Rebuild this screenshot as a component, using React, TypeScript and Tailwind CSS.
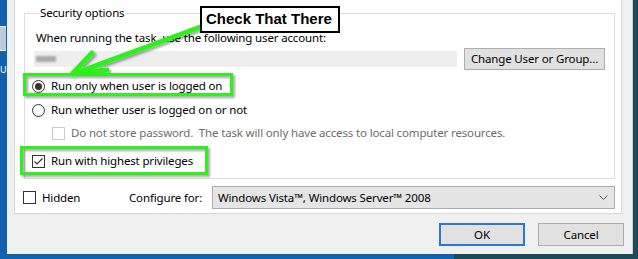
import React from "react";

const ui = { fontFamily: '"Noto Sans", "Open Sans", sans-serif' };

function Radio({ checked }: { checked?: boolean }) {
  return (
    <span className="w-[13px] h-[13px] rounded-full border border-[#333333] bg-white flex items-center justify-center shrink-0">
      {checked && <span className="w-[7px] h-[7px] rounded-full bg-[#333333]" />}
    </span>
  );
}

function Check({ checked, disabled }: { checked?: boolean; disabled?: boolean }) {
  return (
    <span
      className={
        disabled
          ? "w-[13px] h-[13px] border border-[#cccccc] bg-white shrink-0"
          : "w-[13px] h-[13px] border border-[#333333] bg-white shrink-0 flex items-center justify-center"
      }
    >
      {checked && (
        <svg width="11" height="11" viewBox="0 0 11 11">
          <path d="M1.5 5.5 L4 8 L9.5 2.5" fill="none" stroke="#333" strokeWidth="1.2" />
        </svg>
      )}
    </span>
  );
}

export default function App() {
  return (
    <div className="relative w-[638px] h-[259px] overflow-hidden flex flex-col text-[11.5px] tracking-[-0.15px] text-black" style={ui}>
      <div className="flex h-[254px]">
        <div className="w-[7px] bg-[#1162ae] flex flex-col">
          <div className="mt-[26px] h-[25px] w-[6px] bg-[#b9cbdc] border-y border-[#e8eef4]" />
          <div className="mt-[14px] text-[9px] leading-[10px] text-white">U</div>
        </div>
        <div className="flex-1 bg-[#f0f0f0] flex flex-col border-r border-[#cfcfcf]">
          <div className="ml-[7px] w-[608px] h-[214px] bg-white border-x border-b border-[#d9d9d9] flex flex-col">
            <fieldset className="mt-[5px] ml-[9px] w-[591px] h-[174px] border border-[#dcdcdc] pl-[7px]">
              <legend className="ml-[7px] px-[1px] leading-[16px]">Security options</legend>
              <div className="mt-[9px] ml-[4px] leading-[16px]">When running the task, use the following user account:</div>
              <div className="mt-[2px] flex items-center h-[22px]">
                <div className="ml-[2px] w-[423px] h-[16px] bg-[#eeeeee] flex items-center">
                  <div className="ml-[2px] w-[20px] h-[6px] bg-[#a9a9a9] blur-[1px]" />
                </div>
                <button className="ml-[7px] w-[141px] h-[22px] bg-[#e1e1e1] border border-[#adadad] leading-[16px]">
                  Change User or Group...
                </button>
              </div>
              <div className="mt-[8px] flex items-center h-[16px] gap-[6px]">
                <Radio checked />
                <span className="leading-[16px]">Run only when user is logged on</span>
              </div>
              <div className="mt-[8px] flex items-center h-[16px] gap-[6px]">
                <Radio />
                <span className="leading-[16px]">Run whether user is logged on or not</span>
              </div>
              <div className="mt-[7px] ml-[20px] flex items-center h-[16px] gap-[6px]">
                <Check disabled />
                <span className="leading-[16px] text-[#6d6d6d]">
                  Do not store password.&nbsp; The task will only have access to local computer resources.
                </span>
              </div>
              <div className="mt-[12px] flex items-center h-[16px] gap-[6px]">
                <Check checked />
                <span className="leading-[16px]">Run with highest privileges</span>
              </div>
            </fieldset>
            <div className="mt-[7px] ml-[8px] flex items-center h-[23px]">
              <div className="w-[106px] flex items-center gap-[6px]">
                <Check />
                <span>Hidden</span>
              </div>
              <span className="w-[83px]">Configure for:</span>
              <div className="w-[403px] h-[23px] bg-[#e5e5e5] border border-[#acacac] flex items-center pl-[5px] pr-[6px]">
                <span className="flex-1">Windows Vista™, Windows Server™ 2008</span>
                <svg width="9" height="6" viewBox="0 0 9 6">
                  <path d="M0.5 0.5 L4.5 4.5 L8.5 0.5" fill="none" stroke="#555" strokeWidth="1" />
                </svg>
              </div>
            </div>
          </div>
          <div className="mt-[9px] pr-[8px] flex justify-end gap-[13px]">
            <button className="w-[86px] h-[23px] bg-[#e1e1e1] border-2 border-[#2a79d0]">OK</button>
            <button className="w-[86px] h-[23px] bg-[#e1e1e1] border border-[#adadad]">Cancel</button>
          </div>
        </div>
        <div className="w-[5px] bg-[#1b4a58]" />
      </div>
      <div className="h-[5px] flex">
        <div className="w-[454px] bg-[#1162ae]" />
        <div className="flex-1 bg-[#1b4a58]" />
      </div>

      <svg className="absolute left-0 top-0 pointer-events-none" width="638" height="259" viewBox="0 0 638 259">
        <defs>
          <filter id="sh" x="-20%" y="-20%" width="140%" height="160%">
            <feDropShadow dx="2" dy="2" stdDeviation="1.2" floodColor="#000" floodOpacity="0.35" />
          </filter>
        </defs>
        <g filter="url(#sh)" fill="none" stroke="#2ef01e" strokeWidth="3">
          <rect x="24.5" y="74.5" width="207" height="20" />
          <rect x="21.5" y="147.5" width="185" height="26" />
          <g strokeWidth="5" strokeLinecap="round" strokeLinejoin="round">
            <line x1="203" y1="26" x2="73" y2="74" />
            <polyline points="92,53 72,74 107,70" />
          </g>
        </g>
      </svg>
      <div
        className="absolute left-[200px] top-[6px] w-[140px] h-[27px] bg-white border-2 border-black pl-[4px] flex items-center text-[15px] font-bold tracking-normal"
        style={{ fontFamily: '"Liberation Sans", Arial, sans-serif' }}
      >
        Check That There
      </div>
    </div>
  );
}
